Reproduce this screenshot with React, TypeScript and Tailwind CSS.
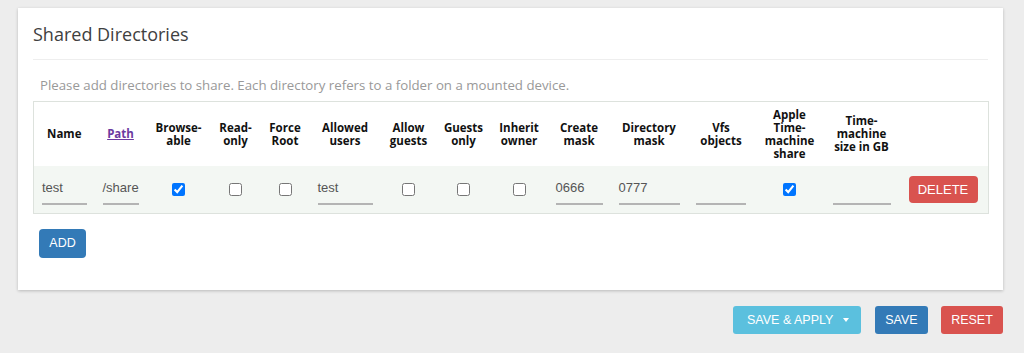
import React from "react";

const cols = [61, 52, 64, 50, 49, 71, 56, 54, 57, 63, 77, 67, 70, 74, 90];

function TextIn({ value, w }: { value: string; w: number }) {
  return (
    <div
      className="h-[32px] border-b-2 border-[#b4b4b4] text-[13px] text-[#555] flex items-center"
      style={{ width: w }}
    >
      {value}
    </div>
  );
}

function Check({ checked }: { checked?: boolean }) {
  return (
    <div className="flex justify-center">
      <input type="checkbox" defaultChecked={checked} className="m-0 w-[13px] h-[13px]" />
    </div>
  );
}

export default function App() {
  const headers: React.ReactNode[] = [
    "Name",
    <span className="text-[#6b3aa0] underline">Path</span>,
    <>Browse-<br />able</>,
    <>Read-<br />only</>,
    <>Force<br />Root</>,
    <>Allowed<br />users</>,
    <>Allow<br />guests</>,
    <>Guests<br />only</>,
    <>Inherit<br />owner</>,
    <>Create<br />mask</>,
    <>Directory<br />mask</>,
    <>Vfs<br />objects</>,
    <>Apple<br />Time-<br />machine<br />share</>,
    <>Time-<br />machine<br />size in GB</>,
    "",
  ];
  const inCell = "px-[8px] pb-[8px] align-bottom";
  return (
    <div className="min-h-[353px] w-[1024px] bg-[#ededed] pt-[8px]" style={{ fontFamily: '"Liberation Sans", Arial, sans-serif' }}>
      <div className="ml-[18px] w-[985px] bg-white shadow-[0_1px_3px_rgba(0,0,0,0.22)] px-[15px] pt-[14px] pb-[32px]">
        <div className="border-b border-[#eeeeee] pb-[12px]">
          <h2 className="text-[18px] leading-[25px] text-[#404040] font-normal" style={{ fontFamily: '"Open Sans", sans-serif' }}>
            Shared Directories
          </h2>
        </div>
        <p className="mt-[15px] pl-[7px] text-[13.25px] leading-[20px] text-[#999]" style={{ fontFamily: '"Open Sans", sans-serif' }}>
          Please add directories to share. Each directory refers to a folder on a mounted device.
        </p>
        <table className="mt-[6px] table-fixed border-collapse border border-[#dde2dd] w-[955px]">
          <colgroup>
            {cols.map((w, i) => (
              <col key={i} style={{ width: w }} />
            ))}
          </colgroup>
          <thead>
            <tr className="h-[64px]">
              {headers.map((h, i) => (
                <th
                  key={i}
                  className="p-0 align-middle text-center text-[11.5px] leading-[13px] font-bold text-[#111]"
                  style={{ fontFamily: '"Open Sans", sans-serif' }}
                >
                  {h}
                </th>
              ))}
            </tr>
          </thead>
          <tbody>
            <tr className="h-[48px] bg-[#f3f7f3]">
              <td className={inCell}><TextIn value="test" w={45} /></td>
              <td className={inCell}><TextIn value="/share" w={36} /></td>
              <td><Check checked /></td>
              <td><Check /></td>
              <td><Check /></td>
              <td className={inCell}><TextIn value="test" w={55} /></td>
              <td><Check /></td>
              <td><Check /></td>
              <td><Check /></td>
              <td className={inCell}><TextIn value="0666" w={47} /></td>
              <td className={inCell}><TextIn value="0777" w={61} /></td>
              <td className={inCell}><TextIn value="" w={50} /></td>
              <td><Check checked /></td>
              <td className={inCell}><TextIn value="" w={58} /></td>
              <td className="pl-[10px]">
                <button className="w-[69px] h-[27px] rounded-[4px] bg-[#d9534f] text-white text-[13px] leading-none">
                  DELETE
                </button>
              </td>
            </tr>
          </tbody>
        </table>
        <button className="mt-[15px] ml-[6px] w-[47px] h-[29px] rounded-[4px] bg-[#337ab7] text-white text-[12.5px] leading-none">
          ADD
        </button>
      </div>
      <div className="flex justify-end pr-[21px] mt-[16px] gap-[13px]">
        <button className="w-[128px] h-[28px] rounded-[3px] bg-[#5bc0de] text-white text-[12.5px] leading-none flex items-center pl-[14px]">
          <span>SAVE &amp; APPLY</span>
          <span className="ml-auto mr-[12px] w-0 h-0 border-l-[3.5px] border-r-[3.5px] border-t-[4px] border-l-transparent border-r-transparent border-t-white" />
        </button>
        <button className="ml-[1px] w-[53px] h-[28px] rounded-[3px] bg-[#337ab7] text-white text-[12.5px] leading-none">
          SAVE
        </button>
        <button className="w-[62px] h-[28px] rounded-[3px] bg-[#d9534f] text-white text-[12.5px] leading-none">
          RESET
        </button>
      </div>
    </div>
  );
}
